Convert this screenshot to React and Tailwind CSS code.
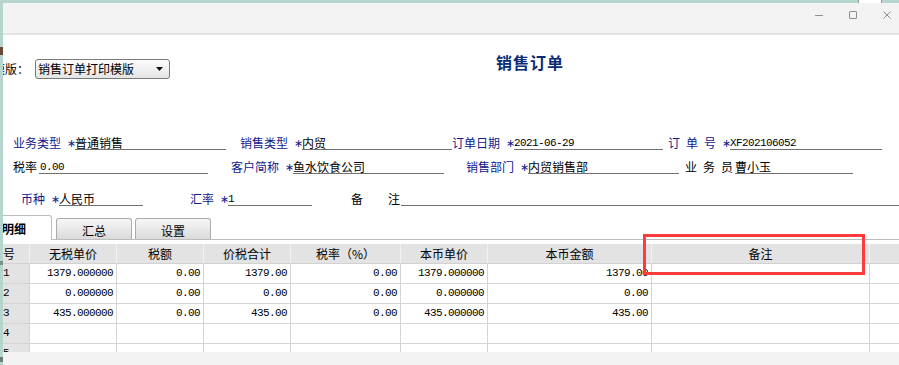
import React from 'react';

const CJK = "font-['Noto_Sans_CJK_SC',sans-serif]";
const MONO = "font-['Liberation_Mono','Noto_Sans_CJK_SC',monospace] text-[11px] tracking-[-0.6px]";

const Star = () => (
  <span className="ml-[6px] w-[8px] text-center text-[11px] leading-[12px] text-[#10208a] font-['DejaVu_Sans',sans-serif]">∗</span>
);

// label + asterisk + underlined value, laid out in one flex row
const Field = ({ label, value, mono, navy = true, star = true, className = '', w, gap = '' }) => (
  <div className={`flex items-end ${className}`}>
    <span className={`leading-[12px] pb-[1px] whitespace-pre ${navy ? 'text-[#10208a]' : 'text-black'}`}>{label}</span>
    {star && <Star />}
    <span className={`${gap} ${w} h-[13px] leading-[12px] border-b border-[#6f6f6f] text-black ${mono ? MONO : ''}`}>{value}</span>
  </div>
);

const Spaced = ({ chars, navy }) => (
  <span className={`flex gap-[6px] ${navy ? 'text-[#10208a]' : 'text-black'}`}>
    {chars.map((c) => (
      <span key={c}>{c}</span>
    ))}
  </span>
);

const cols = [
  { w: 'w-[87px]', h: '无税单价' },
  { w: 'w-[87px]', h: '税额' },
  { w: 'w-[87px]', h: '价税合计' },
  { w: 'w-[110px]', h: '税率（%）' },
  { w: 'w-[87px]', h: '本币单价' },
  { w: 'w-[164px]', h: '本币金额' },
  { w: 'w-[218px]', h: '备注' },
];

const rows = [
  ['1379.000000', '0.00', '1379.00', '0.00', '1379.000000', '1379.00', ''],
  ['0.000000', '0.00', '0.00', '0.00', '0.000000', '0.00', ''],
  ['435.000000', '0.00', '435.00', '0.00', '435.000000', '435.00', ''],
  ['', '', '', '', '', '', ''],
  ['', '', '', '', '', '', ''],
];

export default function App() {
  return (
    <div className={`relative w-[899px] h-[365px] overflow-hidden bg-white text-[12px] text-black ${CJK}`}>
      {/* background window edge */}
      <div className="h-[3px] bg-[#b7d5cf] flex">
        <div className="ml-[858px] w-[24px] h-[3px] bg-white border-x border-[#9a9a9a]" />
      </div>

      <div className="flex h-[362px]">
        <div className="w-[3px] shrink-0 bg-[#b7d5cf] flex flex-col">
          <div className="mt-[44px] h-[8px] bg-[#6b4a3a]" />
          <div className="mt-[206px] h-[4px] bg-[#7d8f8c]" />
          <div className="mt-[92px] h-[5px] bg-[#6e7d7a]" />
        </div>

        <div className="flex-1 flex flex-col overflow-hidden">
          {/* Title bar */}
          <div className="shrink-0 h-[32px] bg-[#f3f3f3] border-b-2 border-[#e3e3e3] flex items-start justify-end pt-[8px] pr-[8px] gap-[26px]">
            <div className="w-[8px] h-[8px] flex items-center">
              <div className="w-[8px] h-px bg-[#8f8f8f]" />
            </div>
            <div className="w-[8px] h-[8px] border border-[#8f8f8f] rounded-[1px]" />
            <svg width="8" height="8" viewBox="0 0 8 8">
              <path d="M0.5 0.5 L7.5 7.5 M7.5 0.5 L0.5 7.5" stroke="#8f8f8f" strokeWidth="1" />
            </svg>
          </div>

          {/* Template + title */}
          <div className="shrink-0 h-[102px] flex items-start">
            <div className="mt-[24px] ml-[-10px] flex items-center">
              <span className="w-[36px] leading-[14px]">模版：</span>
              <div className="ml-[6px] w-[135px] h-[20px] border border-[#7a7a7a] rounded-[3px] bg-gradient-to-b from-[#fdfdfd] to-[#e4e4e4] flex items-center pl-[2px] pr-[6px]">
                <span className="flex-1 leading-[14px]">销售订单打印模版</span>
                <svg width="7" height="4" viewBox="0 0 7 4">
                  <polygon points="0,0 7,0 3.5,4" fill="#111" />
                </svg>
              </div>
            </div>
            <div className="ml-[326px] mt-[18px] text-[16px] leading-[18px] font-bold tracking-[1px] text-[#0a2b77]">
              销售订单
            </div>
          </div>

          {/* Row 1 */}
          <div className="shrink-0 h-[13px] flex items-end">
            <Field className="ml-[10px]" label="业务类型" value="普通销售" w="w-[151px]" />
            <Field className="ml-[14px]" label="销售类型" value="内贸" w="w-[150px]" />
            <Field className="ml-0" label="订单日期" value="2021-06-29" mono w="w-[149px]" />
            <div className="ml-[5px] flex items-end">
              <span className="leading-[12px] pb-[1px]"><Spaced chars={['订', '单', '号']} navy /></span>
              <Star />
              <span className={`w-[152px] h-[13px] leading-[12px] border-b border-[#6f6f6f] ${MONO}`}>XF202106052</span>
            </div>
          </div>

          {/* Row 2 */}
          <div className="shrink-0 mt-[11px] h-[13px] flex items-end">
            <Field className="ml-[10px]" label="税率" value="0.00" mono navy={false} star={false} gap="ml-[2px] pl-[1px]" w="w-[169px]" />
            <Field className="ml-[23px]" label="客户简称" value="鱼水饮食公司" w="w-[151px]" />
            <Field className="ml-[22px]" label="销售部门" value="内贸销售部" w="w-[151px]" />
            <div className="ml-[6px] flex items-end">
              <span className="leading-[12px] pb-[1px]"><Spaced chars={['业', '务', '员']} /></span>
              <span className="ml-[2px] w-[118px] h-[13px] leading-[12px] border-b border-[#6f6f6f]">曹小玉</span>
            </div>
          </div>

          {/* Row 3 */}
          <div className="shrink-0 mt-[19px] h-[13px] flex items-end">
            <Field className="ml-[18px]" label="币种" value="人民币" w="w-[84px]" />
            <Field className="ml-[47px]" label="汇率" value="1" mono w="w-[84px]" />
            <div className="ml-[39px] flex flex-1 items-end">
              <span className="leading-[12px] pb-[1px]">备</span>
              <span className="ml-[25px] leading-[12px] pb-[1px]">注</span>
              <span className="ml-[1px] flex-1 h-[13px] border-b border-[#6f6f6f]" />
            </div>
          </div>

          {/* Tabs */}
          <div className="shrink-0 mt-[9px] h-[25px] flex items-end border-b border-[#bcbcbc]">
            <div className="relative z-10 mb-[-1px] w-[49px] h-[25px] bg-white border border-l-0 border-b-0 border-[#bdbdbd] rounded-tr-[3px] pt-[6px]">
              <span className="block ml-[-1px] leading-[14px] font-bold">明细</span>
            </div>
            <div className="ml-[4px] w-[76px] h-[21px] border border-b-0 border-[#ababab] rounded-t-[3px] bg-gradient-to-b from-[#f7f7f7] to-[#dadada] text-center leading-[14px] pt-[5px]">
              汇总
            </div>
            <div className="ml-[3px] w-[76px] h-[21px] border border-b-0 border-[#ababab] rounded-t-[3px] bg-gradient-to-b from-[#f7f7f7] to-[#dadada] text-center leading-[14px] pt-[5px]">
              设置
            </div>
          </div>

          {/* Grid */}
          <div className="shrink-0 mt-[4px] h-[108px] overflow-hidden">
            <div className="flex h-[20px] bg-[#e3e3e3] border-b border-[#d2d2d2]">
              <div className="w-[27px] shrink-0 border-r border-[#f2f2f2] leading-[19px] overflow-hidden">
                <span className="block ml-[-12px] whitespace-nowrap">序号</span>
              </div>
              {cols.map((c) => (
                <div key={c.h} className={`${c.w} shrink-0 border-r border-[#f2f2f2] text-center leading-[19px]`}>
                  {c.h}
                </div>
              ))}
              <div className="flex-1" />
            </div>
            {rows.map((r, i) => (
              <div key={i} className="flex h-[20px] border-b border-[#d4d4d4]">
                <div className={`w-[27px] shrink-0 bg-[#e3e3e3] border-r border-[#d4d4d4] leading-[19px] ${MONO}`}>{i + 1}</div>
                {cols.map((c, j) => (
                  <div key={c.h} className={`${c.w} shrink-0 border-r border-[#d4d4d4] text-right pr-[3px] leading-[19px] ${MONO}`}>
                    {r[j]}
                  </div>
                ))}
                <div className="flex-1" />
              </div>
            ))}
          </div>
          <div className="shrink-0 h-[13px] bg-[#f3f3f3]" />
        </div>
      </div>

      {/* annotation */}
      <div className="absolute left-[643px] top-[234px] w-[222px] h-[41px] border-[3px] border-[#ff3c3c]" />
    </div>
  );
}
